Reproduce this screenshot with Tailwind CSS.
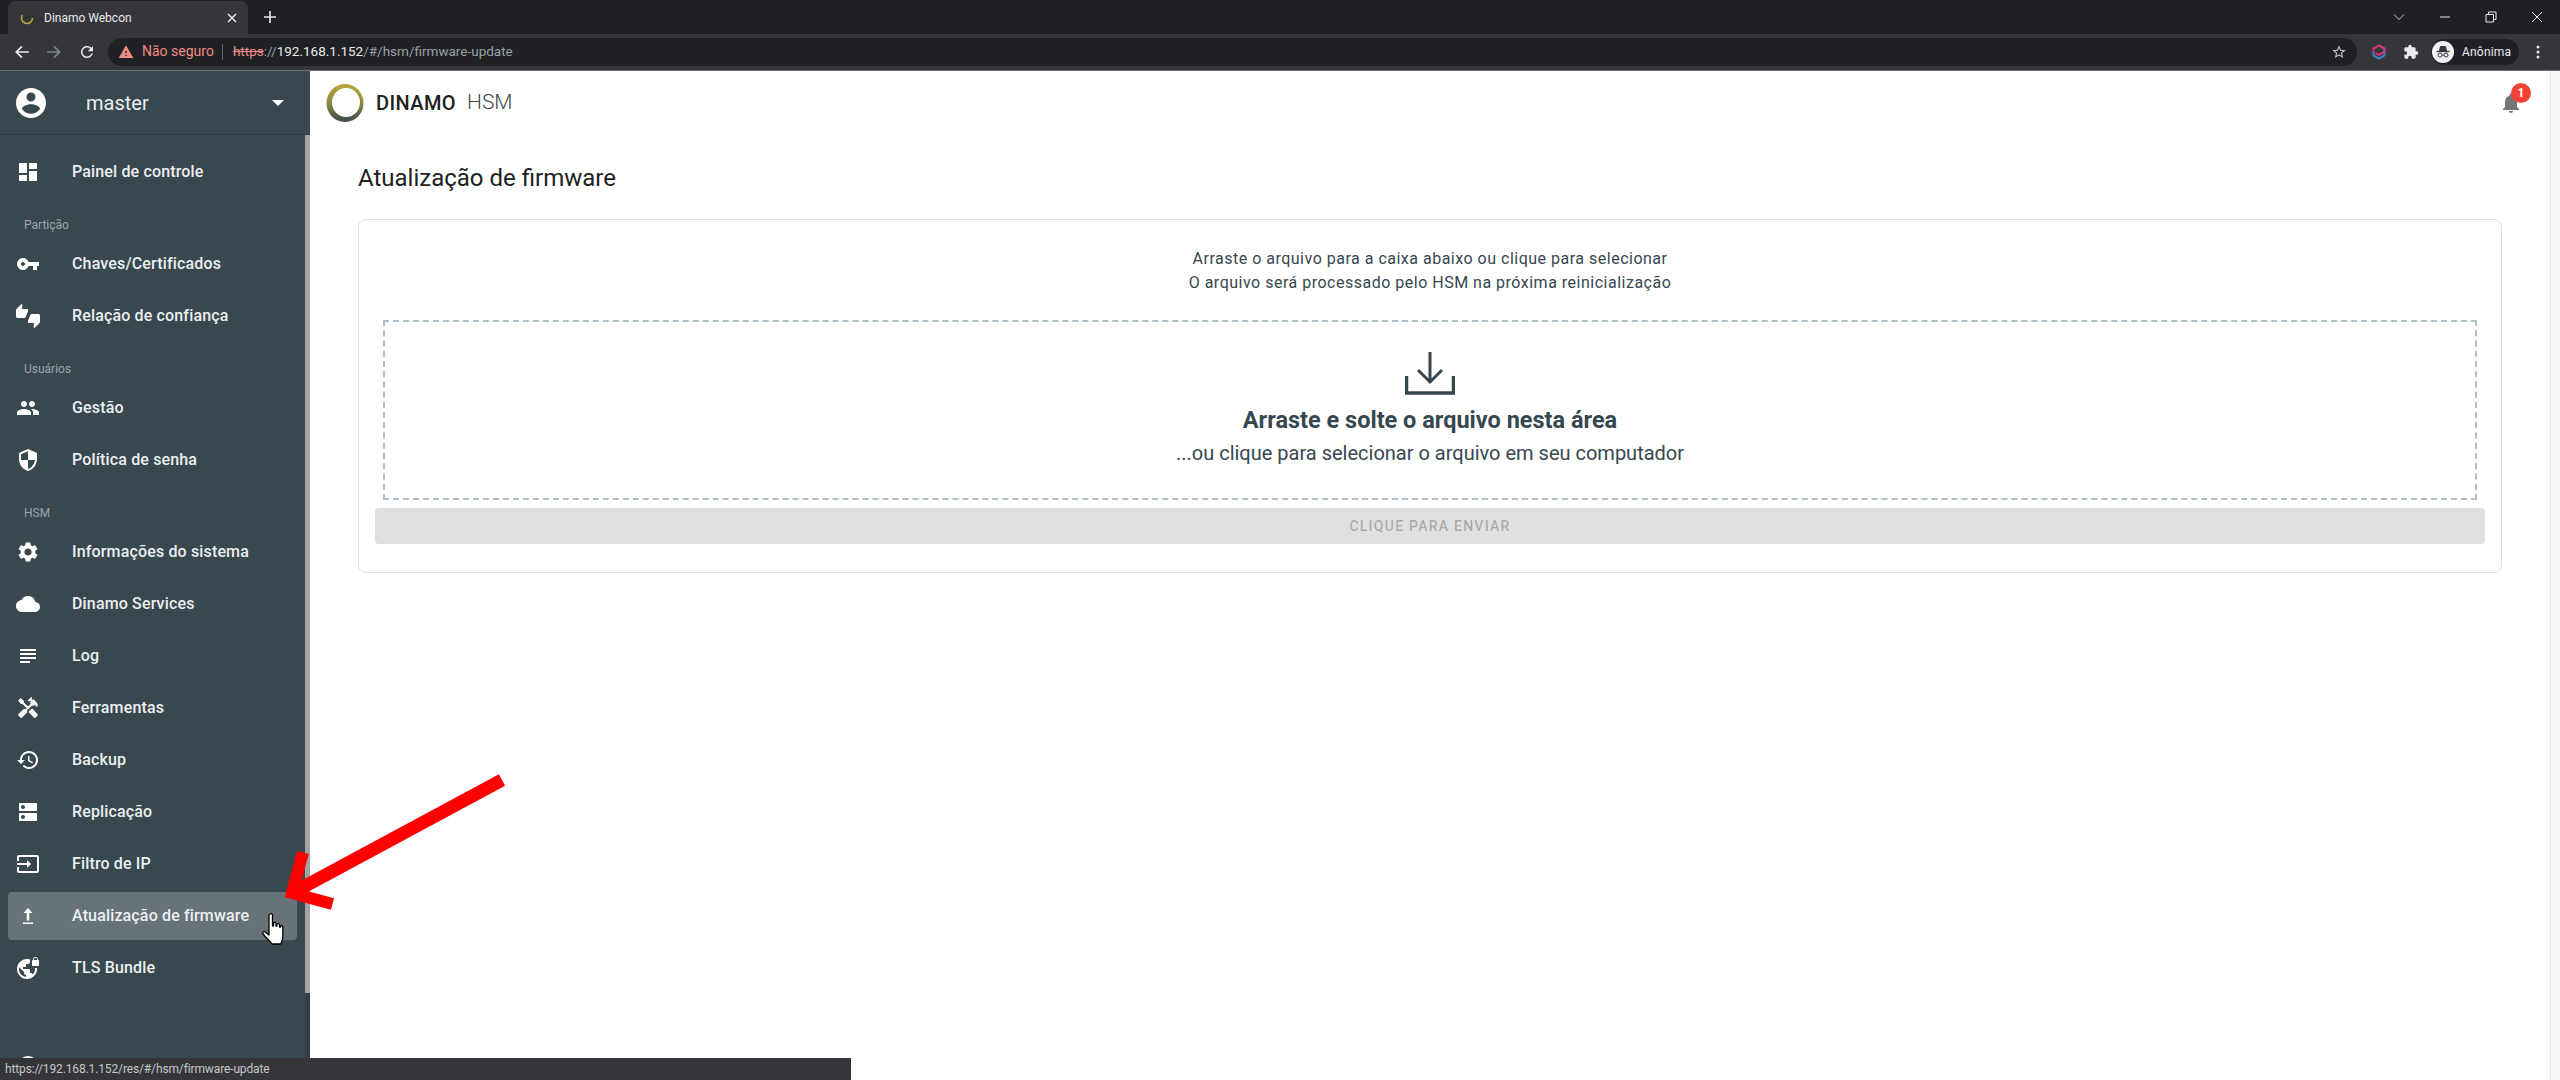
<!DOCTYPE html>
<html lang="pt-BR">
<head>
    <meta charset="UTF-8">
    <title>Dinamo Webcon</title>
    <script src="https://cdn.jsdelivr.net/npm/@tailwindcss/browser@4"></script>
</head>
<body class="relative h-screen overflow-hidden bg-white font-['Roboto',sans-serif] flex flex-col">
    <!-- Browser tab strip -->
    <div class="h-[34px] shrink-0 bg-[#202124] flex items-end">
        <div class="ml-[8px] w-[240px] h-[33px] bg-[#35363a] rounded-t-lg flex items-center pl-[12px] pr-[11px]">
            <svg class="w-[14px] h-[14px] shrink-0" viewBox="0 0 14 14" fill="none"><circle cx="7" cy="7" r="5.500" stroke="#b5a83a" stroke-width="1.600" stroke-dasharray="20 15"/></svg>
            <span class="ml-[10px] text-[12px] text-[#e8eaed]">Dinamo Webcon</span>
            <svg class="ml-auto w-[10px] h-[10px]" viewBox="0 0 10 10" stroke="#e8eaed" stroke-width="1.500"><path d="M1 1l8 8M9 1l-8 8"/></svg>
        </div>
        <svg class="ml-[16px] mb-[11px] w-[12px] h-[12px]" viewBox="0 0 12 12" stroke="#e8eaed" stroke-width="1.600"><path d="M6 0v12M0 6h12"/></svg>
        <div class="ml-auto flex items-center h-[34px] pr-[17px] gap-[34px]">
            <svg class="w-[12px] h-[12px]" viewBox="0 0 12 12" fill="none" stroke="#c4c7c9" stroke-width="1"><path d="M1 3.500l5 5 5-5"/></svg>
            <svg class="w-[12px] h-[12px]" viewBox="0 0 12 12" stroke="#e8eaed" stroke-width="1"><path d="M1 6h10"/></svg>
            <svg class="w-[12px] h-[12px]" viewBox="0 0 12 12" fill="none" stroke="#e8eaed" stroke-width="1"><path d="M1 3.500h7.500v7.500H1zM3.500 3.500V1H11v7.500H8.500"/></svg>
            <svg class="w-[12px] h-[12px]" viewBox="0 0 12 12" stroke="#e8eaed" stroke-width="1"><path d="M1 1l10 10M11 1L1 11"/></svg>
        </div>
    </div>

    <!-- Browser toolbar -->
    <div class="h-[37px] shrink-0 bg-[#35363a] border-b border-[#6b6d70] flex items-center pb-[1px]">
        <div class="w-[108px] shrink-0 flex items-center pl-[14px] gap-[16px]">
            <svg class="w-[16px] h-[16px]" viewBox="0 0 14 14" fill="none" stroke="#e8eaed" stroke-width="1.500"><path d="M13 7H2M7 2L2 7l5 5"/></svg>
            <svg class="w-[16px] h-[16px]" viewBox="0 0 14 14" fill="none" stroke="#80868b" stroke-width="1.500"><path d="M1 7h11M7 2l5 5-5 5"/></svg>
            <svg class="w-[18px] h-[18px]" viewBox="0 0 24 24" fill="#e8eaed"><path d="M17.650 6.350C16.200 4.900 14.210 4 12 4c-4.420 0-7.990 3.580-7.990 8s3.570 8 7.990 8c3.730 0 6.840-2.550 7.730-6h-2.080c-.82 2.330-3.040 4-5.650 4-3.310 0-6-2.690-6-6s2.690-6 6-6c1.660 0 3.140.69 4.220 1.780L13 11h7V4l-2.350 2.350z"/></svg>
        </div>
        <div class="w-[2249px] h-[28px] rounded-full bg-[#202124] flex items-center pl-[10px] pr-[10px] text-[13.500px]">
            <svg class="w-[16px] h-[16px]" viewBox="0 0 24 24" fill="#f28b82"><path d="M1 21h22L12 2 1 21zm12-3h-2v-2h2v2zm0-4h-2v-4h2v4z"/></svg>
            <span class="ml-[8px] text-[#f28b82] text-[14px]">Não seguro</span>
            <span class="ml-[8px] w-[1px] h-[16px] bg-[#5f6368]"></span>
            <span class="ml-[10px] text-[#9aa0a6]"><span class="text-[#f28b82] line-through">https</span>://<span class="text-[#e8eaed]">192.168.1.152</span>/#/hsm/firmware-update</span>
            <svg class="ml-auto w-[16px] h-[16px]" viewBox="0 0 24 24" fill="#c4c7c9"><path d="M22 9.240l-7.190-.620L12 2 9.190 8.630 2 9.240l5.460 4.730L5.820 21 12 17.270 18.180 21l-1.630-7.030L22 9.240zM12 15.400l-3.760 2.270 1-4.280-3.320-2.880 4.380-.380L12 6.100l1.710 4.040 4.380.380-3.320 2.880 1 4.280L12 15.400z"/></svg>
        </div>
        <div class="flex items-center ml-[14px]">
            <svg class="w-[16px] h-[16px]" viewBox="0 0 16 16" fill="none" stroke-width="2"><path d="M8 1.500l5.500 3.200v6.600L8 14.500l-5.500-3.200V8" stroke="#3b82c4"/><path d="M2.500 8V4.700L8 1.500l5.500 3.200V8L8 11 4.500 9" stroke="#d6336c"/></svg>
            <svg class="ml-[16px] w-[16px] h-[16px]" viewBox="0 0 24 24" fill="#e8eaed"><path d="M20.500 11H19V7c0-1.100-.9-2-2-2h-4V3.500C13 2.120 11.880 1 10.500 1S8 2.120 8 3.500V5H4c-1.100 0-1.990.9-1.990 2v3.800H3.500c1.490 0 2.700 1.210 2.700 2.700s-1.210 2.700-2.700 2.700H2V20c0 1.100.9 2 2 2h3.800v-1.500c0-1.490 1.210-2.700 2.700-2.700 1.490 0 2.700 1.210 2.700 2.700V22H17c1.100 0 2-.9 2-2v-4h1.500c1.380 0 2.500-1.120 2.500-2.500S21.880 11 20.500 11z"/></svg>
            <div class="ml-[12px] w-[88px] h-[26px] rounded-full bg-[#202124] flex items-center pl-[1px]">
                <span class="w-[22px] h-[22px] rounded-full bg-[#f1f3f4] flex items-center justify-center">
                    <svg class="w-[16px] h-[16px]" viewBox="0 0 16 16" fill="none" stroke="#35363a"><path d="M1.500 7.500h13" stroke-width="1.300"/><path d="M4.500 7l1-4.500h5l1 4.500z" fill="#35363a"/><circle cx="5" cy="11" r="2"/><circle cx="11" cy="11" r="2"/><path d="M7 11h2"/></svg>
                </span>
                <span class="ml-[8px] text-[12px] text-[#e8eaed] tracking-[0.2px]">Anônima</span>
            </div>
            <svg class="ml-[17px] w-[4px] h-[14px]" viewBox="0 0 4 14" fill="#e8eaed"><circle cx="2" cy="2" r="1.500"/><circle cx="2" cy="7" r="1.500"/><circle cx="2" cy="12" r="1.500"/></svg>
        </div>
    </div>

    <!-- App -->
    <div class="flex-1 min-h-0 flex">
        <!-- Sidebar -->
        <aside class="w-[310px] shrink-0 bg-[#39474f] text-white flex flex-col overflow-hidden">
            <div class="h-[64px] shrink-0 border-b border-[#2f3c44] flex items-center pl-[13px] pr-[26px]">
                <svg class="w-[36px] h-[36px] shrink-0" viewBox="0 0 24 24" fill="#fff"><path d="M12 2C6.480 2 2 6.480 2 12s4.480 10 10 10 10-4.480 10-10S17.520 2 12 2zm0 3c1.660 0 3 1.340 3 3s-1.340 3-3 3-3-1.340-3-3 1.340-3 3-3zm0 14.200c-2.500 0-4.710-1.280-6-3.220.030-1.990 4-3.080 6-3.080 1.990 0 5.970 1.090 6 3.080-1.290 1.940-3.500 3.220-6 3.220z"/></svg>
                <span class="ml-[37px] text-[20px] text-[#eceff1]">master</span>
                <span class="ml-auto w-0 h-0 border-x-[6px] border-t-[6px] border-x-transparent border-t-white"></span>
            </div>
            <div class="flex-1 min-h-0 flex">
                <nav class="flex-1 min-w-0 pt-[11px] text-[16px] font-medium tracking-[0.15px] text-[#eceff1]">
                    <a class="h-[52px] flex items-center pl-[16px]">
                        <svg class="w-[24px] h-[24px] shrink-0" viewBox="0 0 24 24" fill="#fff"><path d="M3 13h8V3H3v10zm0 8h8v-6H3v6zm10 0h8V11h-8v10zm0-18v6h8V3h-8z"/></svg>
                        <span class="ml-[32px]">Painel de controle</span>
                    </a>
                    <div class="h-[40px] pl-[24px] pt-[19px] text-[12px] leading-[16px] font-normal tracking-normal text-[#9aa5ab]">Partição</div>
                    <a class="h-[52px] flex items-center pl-[16px]">
                        <svg class="w-[24px] h-[24px] shrink-0" viewBox="0 0 24 24" fill="#fff"><path d="M12.650 10C11.830 7.670 9.610 6 7 6c-3.310 0-6 2.690-6 6s2.690 6 6 6c2.610 0 4.830-1.670 5.650-4H17v4h4v-4h2v-4H12.650zM7 14c-1.100 0-2-.9-2-2s.9-2 2-2 2 .9 2 2-.9 2-2 2z"/></svg>
                        <span class="ml-[32px]">Chaves/Certificados</span>
                    </a>
                    <a class="h-[52px] flex items-center pl-[16px]">
                        <svg class="w-[24px] h-[24px] shrink-0" viewBox="0 0 24 24" fill="#fff"><path d="M12 6c0-.55-.45-1-1-1H5.820l.66-3.180.020-.23c0-.31-.13-.59-.33-.8L5.380 0 .44 4.940C.17 5.210 0 5.590 0 6v6.500c0 .83.67 1.500 1.500 1.500h6.750c.62 0 1.150-.38 1.380-.91l2.260-5.290c.07-.17.11-.36.11-.55V6zm10.500 4h-6.750c-.62 0-1.150.38-1.380.91l-2.260 5.290c-.07.17-.11.36-.11.55V18c0 .55.45 1 1 1h5.180l-.66 3.180-.020.24c0 .31.13.59.33.8l.79.78 4.940-4.940c.27-.27.44-.65.44-1.060v-6.500c0-.83-.67-1.500-1.500-1.500z"/></svg>
                        <span class="ml-[32px]">Relação de confiança</span>
                    </a>
                    <div class="h-[40px] pl-[24px] pt-[19px] text-[12px] leading-[16px] font-normal tracking-normal text-[#9aa5ab]">Usuários</div>
                    <a class="h-[52px] flex items-center pl-[16px]">
                        <svg class="w-[24px] h-[24px] shrink-0" viewBox="0 0 24 24" fill="#fff"><path d="M16 11c1.660 0 2.990-1.340 2.990-3S17.660 5 16 5c-1.660 0-3 1.340-3 3s1.340 3 3 3zm-8 0c1.660 0 2.990-1.340 2.990-3S9.660 5 8 5C6.340 5 5 6.340 5 8s1.340 3 3 3zm0 2c-2.330 0-7 1.170-7 3.500V19h14v-2.500c0-2.330-4.670-3.500-7-3.500zm8 0c-.29 0-.62.020-.97.050 1.160.84 1.970 1.970 1.970 3.450V19h6v-2.500c0-2.330-4.670-3.500-7-3.500z"/></svg>
                        <span class="ml-[32px]">Gestão</span>
                    </a>
                    <a class="h-[52px] flex items-center pl-[16px]">
                        <svg class="w-[24px] h-[24px] shrink-0" viewBox="0 0 24 24" fill="#fff"><path d="M12 1L3 5v6c0 5.550 3.840 10.740 9 12 5.160-1.260 9-6.450 9-12V5l-9-4zm0 10.990h7c-.53 4.120-3.280 7.790-7 8.940V12H5V6.300l7-3.110v8.800z"/></svg>
                        <span class="ml-[32px]">Política de senha</span>
                    </a>
                    <div class="h-[40px] pl-[24px] pt-[19px] text-[12px] leading-[16px] font-normal tracking-normal text-[#9aa5ab]">HSM</div>
                    <a class="h-[52px] flex items-center pl-[16px]">
                        <svg class="w-[24px] h-[24px] shrink-0" viewBox="0 0 24 24" fill="#fff"><path d="M19.140 12.940c.04-.3.060-.61.060-.94 0-.32-.020-.64-.07-.94l2.030-1.580c.18-.14.23-.41.12-.61l-1.920-3.320c-.12-.22-.37-.29-.59-.22l-2.390.96c-.5-.38-1.030-.7-1.620-.94l-.36-2.540c-.04-.24-.24-.41-.48-.41h-3.840c-.24 0-.43.17-.47.41l-.36 2.540c-.59.24-1.130.57-1.620.94l-2.390-.96c-.22-.08-.47 0-.59.22L2.740 8.870c-.12.21-.08.47.12.61l2.030 1.580c-.05.3-.09.63-.09.94s.020.64.07.94l-2.030 1.580c-.18.14-.23.41-.12.61l1.920 3.320c.12.22.37.29.59.22l2.390-.96c.5.38 1.030.7 1.620.94l.36 2.540c.05.24.24.41.48.41h3.840c.24 0 .44-.17.47-.41l.36-2.540c.59-.24 1.130-.56 1.620-.94l2.390.96c.22.08.47 0 .59-.22l1.920-3.320c.12-.22.07-.47-.12-.61l-2.010-1.580zM12 15.600c-1.980 0-3.600-1.620-3.600-3.600s1.620-3.600 3.600-3.600 3.600 1.620 3.600 3.600-1.620 3.600-3.600 3.600z"/></svg>
                        <span class="ml-[32px]">Informações do sistema</span>
                    </a>
                    <a class="h-[52px] flex items-center pl-[16px]">
                        <svg class="w-[24px] h-[24px] shrink-0" viewBox="0 0 24 24" fill="#fff"><path d="M19.350 10.040C18.670 6.590 15.640 4 12 4 9.110 4 6.600 5.640 5.350 8.040 2.340 8.360 0 10.910 0 14c0 3.310 2.690 6 6 6h13c2.760 0 5-2.240 5-5 0-2.640-2.050-4.780-4.650-4.960z"/></svg>
                        <span class="ml-[32px]">Dinamo Services</span>
                    </a>
                    <a class="h-[52px] flex items-center pl-[16px]">
                        <svg class="w-[24px] h-[24px] shrink-0" viewBox="0 0 24 24" fill="#fff"><path d="M14 17H4v2h10v-2zm6-8H4v2h16V9zM4 15h16v-2H4v2zM4 5v2h16V5H4z"/></svg>
                        <span class="ml-[32px]">Log</span>
                    </a>
                    <a class="h-[52px] flex items-center pl-[16px]">
                        <svg class="w-[24px] h-[24px] shrink-0" viewBox="0 0 24 24" fill="#fff"><path d="M21.670 18.170l-5.300-5.300h-.99l-2.540 2.540v.99l5.300 5.300c.39.39 1.020.39 1.410 0l2.120-2.120c.39-.38.39-1.020 0-1.410zM17.340 10.190l1.410-1.410 2.120 2.120c1.170-1.170 1.170-3.070 0-4.240l-3.540-3.540-1.410 1.410V1.710L15.220 1l-3.540 3.540.71.71h2.830l-1.410 1.410 1.060 1.060-2.890 2.890-4.130-4.130V5.060L4.830 2.040 2 4.870 5.030 7.900h1.410l4.130 4.130-.85.85H7.600l-5.300 5.300c-.39.39-.39 1.020 0 1.410l2.120 2.120c.39.39 1.020.39 1.410 0l5.300-5.300v-2.120l5.150-5.150 1.060 1.050z"/></svg>
                        <span class="ml-[32px]">Ferramentas</span>
                    </a>
                    <a class="h-[52px] flex items-center pl-[16px]">
                        <svg class="w-[24px] h-[24px] shrink-0" viewBox="0 0 24 24" fill="#fff"><path d="M13 3c-4.970 0-9 4.030-9 9H1l3.890 3.890.07.14L9 12H6c0-3.870 3.130-7 7-7s7 3.130 7 7-3.130 7-7 7c-1.930 0-3.680-.79-4.940-2.060l-1.420 1.420C8.270 19.990 10.510 21 13 21c4.970 0 9-4.030 9-9s-4.030-9-9-9zm-1 5v5l4.280 2.540.72-1.210-3.500-2.080V8H12z"/></svg>
                        <span class="ml-[32px]">Backup</span>
                    </a>
                    <a class="h-[52px] flex items-center pl-[16px]">
                        <svg class="w-[24px] h-[24px] shrink-0" viewBox="0 0 24 24" fill="#fff"><path d="M20 13H4c-.55 0-1 .45-1 1v6c0 .55.45 1 1 1h16c.55 0 1-.45 1-1v-6c0-.55-.45-1-1-1zM7 19c-1.100 0-2-.9-2-2s.9-2 2-2 2 .9 2 2-.9 2-2 2zM20 3H4c-.55 0-1 .45-1 1v6c0 .55.45 1 1 1h16c.55 0 1-.45 1-1V4c0-.55-.45-1-1-1zM7 9c-1.100 0-2-.9-2-2s.9-2 2-2 2 .9 2 2-.9 2-2 2z"/></svg>
                        <span class="ml-[32px]">Replicação</span>
                    </a>
                    <a class="h-[52px] flex items-center pl-[16px]">
                        <svg class="w-[24px] h-[24px] shrink-0" viewBox="0 0 24 24" fill="#fff"><path d="M21 3.010H3c-1.100 0-2 .9-2 2V9h2V4.990h18v14.030H3V15H1v4.010c0 1.100.9 1.980 2 1.980h18c1.100 0 2-.88 2-1.980v-14c0-1.110-.9-2-2-2zM11 16l4-4-4-4v3H1v2h10v3z"/></svg>
                        <span class="ml-[32px]">Filtro de IP</span>
                    </a>
                    <a class="h-[48px] my-[2px] mx-[8px] rounded bg-[#687379] flex items-center pl-[8px]">
                        <svg class="w-[24px] h-[24px] shrink-0" viewBox="0 0 24 24" fill="#fff"><path d="M12 4l4.500 5h-3.200v7.500h-2.600V9H7.500z"/><rect x="7" y="18.500" width="10" height="1.500"/></svg>
                        <span class="ml-[32px]">Atualização de firmware</span>
                    </a>
                    <a class="h-[52px] flex items-center pl-[16px]">
                        <svg class="w-[24px] h-[24px] shrink-0" viewBox="0 0 24 24" fill="#fff"><path d="M22 4v-.5C22 2.120 20.880 1 19.500 1S17 2.120 17 3.500V4c-.55 0-1 .45-1 1v4c0 .55.45 1 1 1h5c.55 0 1-.45 1-1V5c0-.55-.45-1-1-1zm-.8 0h-3.400v-.5c0-.94.76-1.700 1.700-1.700s1.700.76 1.700 1.700V4zm-2.280 8c.04.33.080.66.080 1 0 2.080-.8 3.970-2.100 5.390-.26-.81-1-1.390-1.900-1.390h-1v-3c0-.55-.45-1-1-1H7v-2h2c.55 0 1-.45 1-1V8h2c1.100 0 2-.9 2-2V3.460c-.95-.3-1.950-.46-3-.46C5.480 3 1 7.480 1 13s4.480 10 10 10 10-4.480 10-10c0-.34-.020-.67-.05-1h-2.030zM10 20.930c-3.950-.49-7-3.850-7-7.930 0-.62.080-1.210.21-1.790L8 16v1c0 1.100.9 2 2 2v1.930z"/></svg>
                        <span class="ml-[32px]">TLS Bundle</span>
                    </a>
                    <a class="h-[52px] mt-[46px] flex items-center pl-[16px]">
                        <svg class="w-[24px] h-[24px] shrink-0" viewBox="0 0 24 24" fill="#fff"><circle cx="12" cy="12" r="10"/></svg>
                        <span class="ml-[32px]">Sair</span>
                    </a>
                </nav>
                <!-- Sidebar scrollbar -->
                <div class="w-[5px] shrink-0 bg-[#323f47]">
                    <div class="h-[858px] bg-[#a3a3a3]"></div>
                </div>
            </div>
        </aside>

        <!-- Content -->
        <main class="flex-1 min-w-0 flex flex-col">
            <header class="h-[64px] shrink-0 flex items-center pl-[16px] pr-[27px]">
                <svg class="w-[38px] h-[38px] shrink-0" viewBox="0 0 38 38">
                    <defs>
                        <linearGradient id="ring" x1="0" y1="0" x2="0" y2="1">
                            <stop offset="0" stop-color="#b7aa38"/>
                            <stop offset="0.5" stop-color="#8f8a40"/>
                            <stop offset="1" stop-color="#3c474c"/>
                        </linearGradient>
                    </defs>
                    <ellipse cx="19" cy="19" rx="18.500" ry="19" fill="url(#ring)"/>
                    <ellipse cx="20" cy="18.500" rx="14" ry="14.500" fill="#fff"/>
                </svg>
                <span class="ml-[12px] text-[20px] font-medium text-[#212121] tracking-[0.4px]">DINAMO</span>
                <span class="ml-[11px] text-[21px] font-light text-[#444]">HSM</span>
                <div class="relative ml-auto w-[24px] h-[24px]">
                    <svg class="w-[24px] h-[24px]" viewBox="0 0 24 24" fill="#757575"><path d="M12 22c1.100 0 2-.9 2-2h-4c0 1.100.9 2 2 2zm6-6v-5c0-3.070-1.640-5.640-4.500-6.320V4c0-.83-.67-1.500-1.500-1.500s-1.500.67-1.500 1.500v.68C7.630 5.360 6 7.920 6 11v5l-2 2v1h16v-1l-2-2z"/></svg>
                    <span class="absolute left-[12px] top-[-8px] w-[20px] h-[20px] rounded-full bg-[#f44336] text-white text-[12px] font-bold flex items-center justify-center">1</span>
                </div>
            </header>
            <div class="px-12">
                <h1 class="h-[84px] pt-[27px] text-[24px] leading-[32px] font-normal text-[#212121]">Atualização de firmware</h1>
                <section class="h-[354px] rounded-lg border border-[#e0e0e0] px-[16px] pt-[27px] flex flex-col">
                    <p class="text-center text-[16px] leading-[24px] tracking-[0.5px] text-[#37474f]">Arraste o arquivo para a caixa abaixo ou clique para selecionar<br>O arquivo será processado pelo HSM na próxima reinicialização</p>
                    <div class="mt-[25px] mx-[8px] h-[180px] border-2 border-dashed border-[#b0bec5] flex flex-col items-center pt-[27px] text-[#37474f]">
                        <svg class="w-[50px] h-[48px] shrink-0" viewBox="0 0 50 48" fill="none" stroke="#37474f" stroke-width="3"><path d="M25 3v30M13 21l12 12 12-12"/><path d="M1.500 27v17h47V27" stroke-width="3.500"/></svg>
                        <h2 class="mt-[7px] text-[23.500px] leading-[32px] font-bold">Arraste e solte o arquivo nesta área</h2>
                        <p class="text-[20px] leading-[34px]">...ou clique para selecionar o arquivo em seu computador</p>
                    </div>
                    <button class="mt-[8px] h-[36px] rounded bg-[#e0e0e0] text-[14px] font-medium tracking-[1.250px] text-black/25">CLIQUE PARA ENVIAR</button>
                </section>
            </div>
        </main>

        <!-- Page scrollbar -->
        <div class="w-[10px] shrink-0 border-l border-[#e8e8e8] bg-[#f6f6f6]"></div>
    </div>

    <!-- Status bubble -->
    <div class="absolute left-0 bottom-0 w-[851px] h-[22px] bg-[#35363a] text-[#c4c7c9] text-[12px] leading-[22px] pl-[5px] tracking-[-0.13px]">https://192.168.1.152/res/#/hsm/firmware-update</div>

    <!-- Annotation arrow -->
    <svg class="absolute left-[270px] top-[760px] w-[250px] h-[170px]" viewBox="0 0 250 170" fill="none" stroke="#ff0000">
        <path d="M232 20L24 132" stroke-width="13"/>
        <path d="M33 92.500L22 133l40.500 11" stroke-width="12"/>
    </svg>

    <!-- Hand cursor -->
    <svg class="absolute left-[261px] top-[912px] w-[26px] h-[34px]" viewBox="0 0 26 34" fill="#fff" stroke="#000" stroke-width="1.300" stroke-linejoin="round"><path d="M9 2c1.300-1 2.500 0 2.500 1.500V14l1-.2V11c1-1.200 2.400-.7 2.500.8V14l1 0v-2c1-1 2.400-.6 2.500.8V15h1v-1c1-.8 2.200-.3 2.300 1v10c0 3-1 5-2 7H11c-2-3-5-5-9-10-1-1.600.6-3 2.300-2l3.700 3V3.500c0-.6.4-1.100 1-1.500z"/></svg>
</body>
</html>
